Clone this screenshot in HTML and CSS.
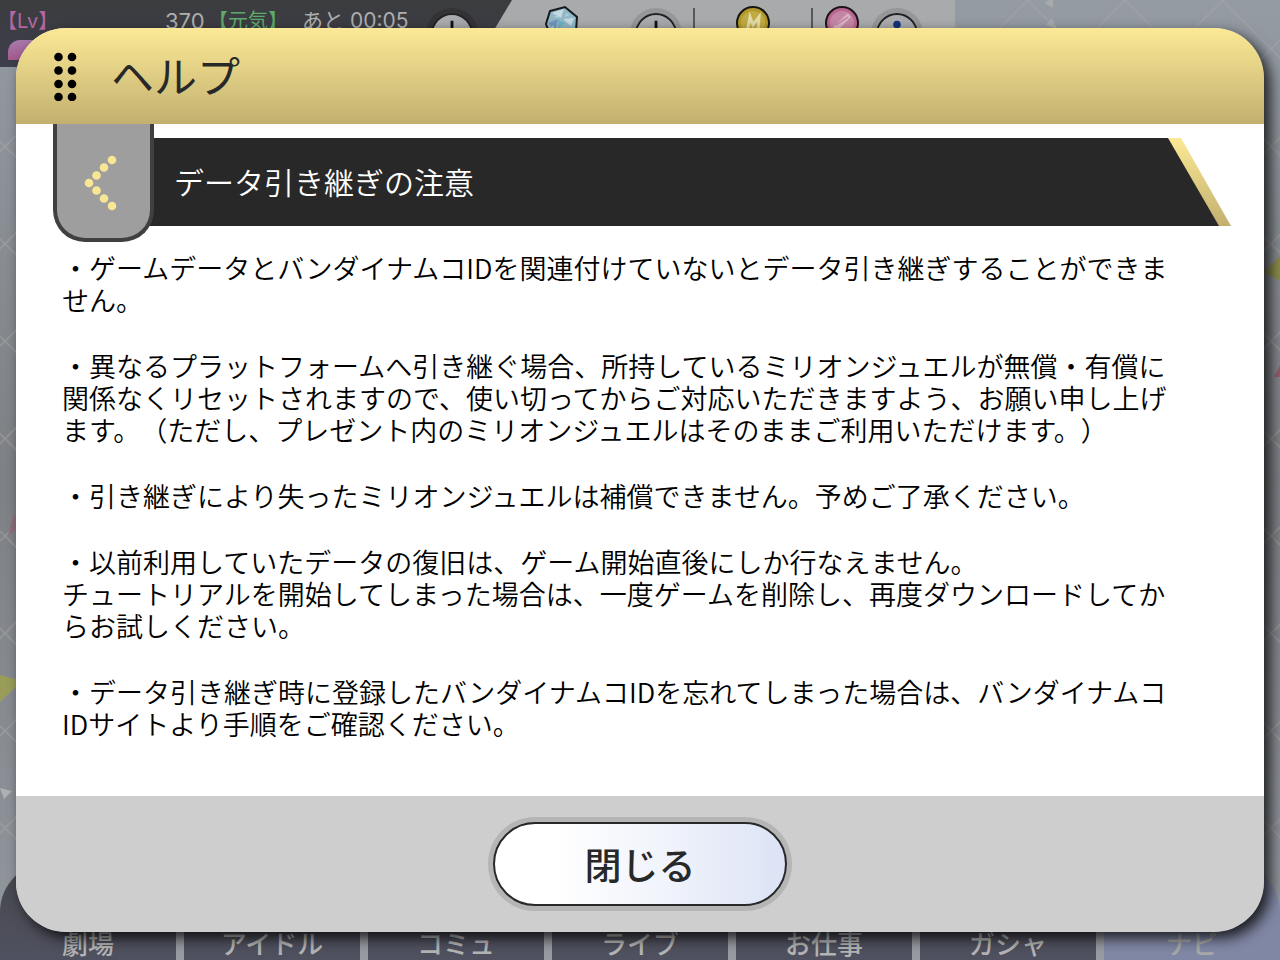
FILE: index.html
```
<!doctype html>
<html lang="ja">
    <head>
        <meta charset="utf-8" />
        <meta name="viewport" content="width=device-width, initial-scale=1" />
        <title>ヘルプ</title>
        <link rel="stylesheet" href="styles.css">
    </head>
    <body>
        <div class="game">
            <svg class="backdrop" aria-hidden="true">
                <defs>
                    <pattern id="lattice" x="5" y="49" width="97.4" height="97.4" patternUnits="userSpaceOnUse">
                        <path d="M0 0L97.4 97.4M97.4 0L0 97.4" stroke="#a9a8a7" stroke-opacity=".55" stroke-width="1.5" />
                    </pattern>
                </defs>
                <rect width="100%" height="100%" fill="url(#lattice)" />
                <path d="M0 675L22 681L0 702Z" fill="#999d59" />
                <path d="M0 788L12 791L4 799Z" fill="#aeb0b2" />
                <path d="M14 514L8 535L22 526Z" fill="#8f6f7b" />
                <path d="M1264 272L1282 254V282Z" fill="#8b8d4b" />
                <path d="M1274 377L1284 358V377Z" fill="#955c69" />
                <path d="M1044 3L1053 -3V8ZM1046 25L1052 18L1057 29Z" fill="#a8a9aa" />
            </svg>

            <div class="hud">
                <div class="status">
                    <div class="level"><span class="tag pink">【Lv】</span><i class="bar"></i></div>
                    <span class="points">370</span>
                    <span class="tag green">【元気】</span>
                    <span class="timer">あと 00:05</span>
                    <button class="round dark" aria-label="元気を回復"><svg viewBox="0 0 40 40"><path d="M20 6V34M6 20H34" /></svg></button>
                </div>
                <div class="wallet">
                    <svg class="gem" viewBox="0 0 34 36" aria-hidden="true">
                        <path d="M5 6L20 2L32 12L31 26L19 34L5 30L1 19Z" fill="#91b6c7" stroke="#16191c" stroke-width="2" />
                        <path d="M7 8L19 4L16 13ZM18 14L29 13L26 21Z" fill="#c4dae2" />
                        <path d="M3 18L13 14L10 25ZM20 23L29 24L18 31Z" fill="#7394bd" />
                        <path d="M13 15L20 18L14 23Z" fill="#68b4bd" />
                        <path d="M9 12L12 9L14 13ZM21 8L25 10L20 12ZM6 22L9 20L8 26Z" fill="#a9cfd8" />
                    </svg>
                    <button class="round" aria-label="ジュエルを追加"><svg viewBox="0 0 40 40"><path d="M20 6V34M6 20H34" /></svg></button>
                    <i class="divider"></i>
                    <svg class="coin" viewBox="0 0 36 36" aria-hidden="true">
                        <circle cx="18" cy="18" r="16" fill="#b3982b" stroke="#17150e" stroke-width="2" />
                        <circle cx="18" cy="18" r="12" fill="#c2aa42" />
                        <path d="M12 27L15 12L18 20L24 12L23 27" fill="none" stroke="#e2dca8" stroke-width="3" />
                    </svg>
                    <i class="divider"></i>
                    <svg class="coin pink-coin" viewBox="0 0 36 36" aria-hidden="true">
                        <circle cx="18" cy="18" r="16" fill="#b96790" stroke="#1c1218" stroke-width="2" />
                        <circle cx="18" cy="18" r="12" fill="#c486a4" />
                        <path d="M9 22L24 8L27 12L14 25Z" fill="#d8b2c3" />
                        <path d="M12 20L24 12" stroke="#b96790" stroke-width="1" />
                    </svg>
                    <button class="round" aria-label="情報"><svg viewBox="0 0 40 40"><circle cx="20" cy="10" r="4" fill="#12347c" /><path class="info" d="M20 18V32" /></svg></button>
                </div>
            </div>

            <nav class="tabs">
                <a href="#theater">劇場</a>
                <a href="#idol">アイドル</a>
                <a href="#commu">コミュ</a>
                <a href="#live">ライブ</a>
                <a href="#work">お仕事</a>
                <a href="#gasha">ガシャ</a>
                <a href="#navi" class="active">ナビ</a>
            </nav>

            <div class="modal" role="dialog" aria-labelledby="modal-title">
                <header class="modal-header">
                    <svg class="dots" viewBox="0 0 24 50" aria-hidden="true">
                        <g fill="#000">
                            <circle cx="5.500" cy="6" r="4.300" /><circle cx="19" cy="6" r="4.300" />
                            <circle cx="5.500" cy="19.500" r="4.300" /><circle cx="19" cy="19.500" r="4.300" />
                            <circle cx="5.500" cy="33" r="4.300" /><circle cx="19" cy="33" r="4.300" />
                            <circle cx="5.500" cy="46" r="4.300" /><circle cx="19" cy="46" r="4.300" />
                        </g>
                    </svg>
                    <h1 id="modal-title">ヘルプ</h1>
                </header>

                <main class="modal-body">
                    <div class="section">
                        <button class="back" aria-label="戻る">
                            <svg viewBox="0 0 34 56" aria-hidden="true">
                                <g fill="#f7e794">
                                    <circle cx="28" cy="5" r="4.3" /><circle cx="20" cy="12.5" r="4.3" />
                                    <circle cx="12.5" cy="20.5" r="4.3" /><circle cx="5" cy="28" r="4.3" />
                                    <circle cx="12.5" cy="35.5" r="4.3" /><circle cx="20" cy="43.5" r="4.3" />
                                    <circle cx="28" cy="51" r="4.3" />
                                </g>
                            </svg>
                        </button>
                        <div class="banner"><h2>データ引き継ぎの注意</h2></div>
                    </div>

                    <div class="text">
                        <p>・ゲームデータとバンダイナムコIDを関連付けていないとデータ引き継ぎすることができません。</p>
                        <p>・異なるプラットフォームへ引き継ぐ場合、所持しているミリオンジュエルが無償・有償に関係なくリセットされますので、使い切ってからご対応いただきますよう、お願い申し上げます。（ただし、プレゼント内のミリオンジュエルはそのままご利用いただけます。）</p>
                        <p>・引き継ぎにより失ったミリオンジュエルは補償できません。予めご了承ください。</p>
                        <p>・以前利用していたデータの復旧は、ゲーム開始直後にしか行なえません。<br />
                        チュートリアルを開始してしまった場合は、一度ゲームを削除し、再度ダウンロードしてからお試しください。</p>
                        <p>・データ引き継ぎ時に登録したバンダイナムコIDを忘れてしまった場合は、バンダイナムコIDサイトより手順をご確認ください。</p>
                    </div>
                </main>

                <footer class="modal-footer">
                    <button class="close">閉じる</button>
                </footer>
            </div>
        </div>
    </body>
</html>
```
FILE: styles.css
```
* {
    margin: 0;
    padding: 0;
    box-sizing: border-box;
}

body {
    font-family: "Noto Sans CJK JP", sans-serif;
    color: #000;
    text-spacing-trim: space-all;
}

button {
    font-family: inherit;
    border: 0;
    cursor: pointer;
}

a {
    text-decoration: none;
}

.game {
    position: relative;
    display: flex;
    flex-direction: column;
    justify-content: space-between;
    min-height: 100vh;
    padding: 28px 16px;
    overflow: hidden;
    background: linear-gradient(#949ba3, #7d8084 50%, #92979f);
}

/* everything behind the dialog */
.backdrop {
    position: absolute;
    top: 0;
    left: 0;
    width: 100%;
    height: 100%;
}

.hud {
    position: absolute;
    top: 0;
    left: 0;
    display: flex;
    height: 67px;
    padding-right: 21px;
    background: #a9aaac;
    border-radius: 0 0 42px 0;
    font-family: Inter, "Noto Sans CJK JP", sans-serif;
    font-size: 20px;
    line-height: 24px;
}

.status {
    display: flex;
    width: 512px;
    padding-top: 9px;
    background: linear-gradient(#3b3c3e, #3e3e4c);
    clip-path: polygon(0 0, 100% 0, calc(100% - 40px) 100%, 0 100%);
    color: #aeaeae;
}

.level {
    width: 165px;
}

.tag {
    display: block;
}

.pink {
    padding-left: 7px;
    color: #b366a0;
    text-spacing-trim: trim-start;
}

.green {
    width: 94px;
    color: #5eaa6b;
}

.points {
    width: 43px;
    font-size: 22px;
}

.timer {
    width: 129px;
    font-size: 21px;
}

.bar {
    display: block;
    width: 80px;
    height: 20px;
    margin: 7px 0 0 8px;
    border-radius: 12px 0 0 0;
    background: linear-gradient(#a978ab, #a35a8c);
}

.wallet {
    display: flex;
    align-items: flex-start;
    padding-top: 5px;
}

.gem {
    width: 34px;
    height: 36px;
    margin: 0 42px 0 33px;
}

.coin {
    width: 36px;
    height: 36px;
    margin: 0 40px;
}

.pink-coin {
    margin: 0 2px 0 11px;
}

.divider {
    width: 2px;
    height: 32px;
    margin-top: 3px;
    background: #57585a;
}

.round {
    flex: none;
    width: 42px;
    height: 42px;
    margin: 8px 16px 0 14px;
    border: 2px solid #222;
    border-radius: 50%;
    background: linear-gradient(90deg, #aeaeae, #a4a7af);
    box-shadow: 0 0 0 5px #969799;
}

.round path {
    stroke: #111;
    stroke-width: 3;
}

.round .info {
    stroke: #12347c;
    stroke-width: 5;
}

.round.dark {
    margin: 4px 0 0;
    box-shadow: 0 0 0 5px #333335;
}

.tabs {
    position: absolute;
    bottom: 0;
    left: 0;
    display: flex;
    gap: 8px;
    width: 100%;
    height: 98px;
    overflow: hidden;
    border-radius: 50px 50px 0 0;
    background: #969ba1;
}

.tabs a {
    display: flex;
    flex: 1;
    align-items: flex-end;
    justify-content: center;
    background: linear-gradient(#45474b, #505160);
    color: #b4b4b4;
    font-size: 26px;
    font-weight: 500;
    line-height: 34px;
}

.tabs .active {
    background: #8087a4;
    color: #a8a8a8;
}

/* dialog */
.modal {
    position: relative;
    display: flex;
    flex: 1;
    flex-direction: column;
    overflow: hidden;
    border-radius: 50px;
    background: #fff;
}

.game::after {
    content: "";
    position: absolute;
    top: 28px;
    right: 16px;
    bottom: 28px;
    left: 16px;
    border-radius: 50px;
    box-shadow: 6px 6px 14px rgba(0, 0, 0, 0.8);
    pointer-events: none;
}

.modal-header {
    display: flex;
    align-items: center;
    gap: 34px;
    height: 96px;
    padding: 0 37px;
    background: linear-gradient(#fbe996, #c3b06f);
}

.dots {
    width: 24px;
    height: 50px;
}

h1 {
    padding-bottom: 4px;
    color: #282828;
    font-size: 43px;
    font-weight: 400;
    line-height: 64px;
}

.modal-body {
    flex: 1;
}

.section {
    display: flex;
    align-items: flex-start;
    padding: 0 33px 0 37px;
}

.back {
    position: relative;
    z-index: 1;
    display: flex;
    align-items: center;
    justify-content: center;
    width: 101px;
    height: 118px;
    padding: 3px 5px 0 0;
    border: 4px solid #404040;
    border-top: 0;
    border-radius: 0 0 32px 32px;
    background: #9e9e9e;
}

.back svg {
    width: 34px;
    height: 56px;
}

.banner {
    position: relative;
    flex: 1;
    display: flex;
    align-items: center;
    height: 88px;
    margin: 14px 0 0 -12px;
    padding: 0 0 2px 32px;
    background: linear-gradient(#fbe996, #c3b06f);
    clip-path: polygon(0 0, calc(100% - 50px) 0, 100% 100%, 0 100%);
}

/* dark face of the banner, leaves the gold edge free */
.banner::before {
    content: "";
    position: absolute;
    top: 0;
    right: 12px;
    bottom: 0;
    left: 0;
    background: #282828;
    clip-path: polygon(0 0, calc(100% - 51px) 0, 100% 100%, 0 100%);
}

h2 {
    position: relative;
    color: #fff;
    font-size: 30px;
    font-weight: 350;
    line-height: 44px;
}

.text {
    padding: 10px 78px 40px 46px;
    font-size: 27px;
    font-weight: 350;
    line-height: 32px;
}

.text p + p {
    margin-top: 34px;
}

.modal-footer {
    display: flex;
    align-items: center;
    justify-content: center;
    height: 136px;
    background: #cecece;
}

.close {
    width: 294px;
    height: 84px;
    border: 2px solid #282828;
    border-radius: 42px;
    background: linear-gradient(90deg, #fff 20%, #f0f3fb 60%, #dbe3f5);
    box-shadow: 0 0 0 5px #b5b5b5;
    color: #282828;
    font-size: 37px;
    font-weight: 500;
    line-height: 56px;
}
```
